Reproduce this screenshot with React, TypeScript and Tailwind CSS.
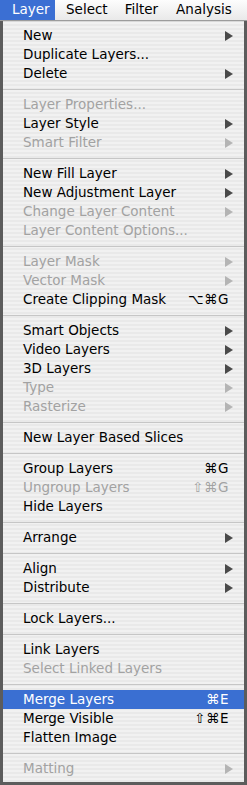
import React from 'react'
import clsx from 'clsx'

type Item =
  | { sep: true }
  | { label: string; disabled?: boolean; sub?: boolean; keys?: string; active?: boolean }

const ITEMS: Item[] = [
  { label: 'New', sub: true },
  { label: 'Duplicate Layers...' },
  { label: 'Delete', sub: true },
  { sep: true },
  { label: 'Layer Properties...', disabled: true },
  { label: 'Layer Style', sub: true },
  { label: 'Smart Filter', sub: true, disabled: true },
  { sep: true },
  { label: 'New Fill Layer', sub: true },
  { label: 'New Adjustment Layer', sub: true },
  { label: 'Change Layer Content', sub: true, disabled: true },
  { label: 'Layer Content Options...', disabled: true },
  { sep: true },
  { label: 'Layer Mask', sub: true, disabled: true },
  { label: 'Vector Mask', sub: true, disabled: true },
  { label: 'Create Clipping Mask', keys: '⌥⌘G' },
  { sep: true },
  { label: 'Smart Objects', sub: true },
  { label: 'Video Layers', sub: true },
  { label: '3D Layers', sub: true },
  { label: 'Type', sub: true, disabled: true },
  { label: 'Rasterize', sub: true, disabled: true },
  { sep: true },
  { label: 'New Layer Based Slices' },
  { sep: true },
  { label: 'Group Layers', keys: '⌘G' },
  { label: 'Ungroup Layers', keys: '⇧⌘G', disabled: true },
  { label: 'Hide Layers' },
  { sep: true },
  { label: 'Arrange', sub: true },
  { sep: true },
  { label: 'Align', sub: true },
  { label: 'Distribute', sub: true },
  { sep: true },
  { label: 'Lock Layers...' },
  { sep: true },
  { label: 'Link Layers' },
  { label: 'Select Linked Layers', disabled: true },
  { sep: true },
  { label: 'Merge Layers', keys: '⌘E', active: true },
  { label: 'Merge Visible', keys: '⇧⌘E' },
  { label: 'Flatten Image' },
  { sep: true },
  { label: 'Matting', sub: true, disabled: true },
]

function Arrow({ disabled }: { disabled?: boolean }) {
  return (
    <svg width="8" height="10" viewBox="0 0 8 10" className="ml-auto">
      <path d="M0 0 L8 5 L0 10 Z" fill={disabled ? '#b4b4b4' : '#4a4a4a'} />
    </svg>
  )
}

export default function App() {
  return (
    <div
      className="w-[247px] h-[785px] overflow-hidden bg-[#5c5c5c] text-[13.5px] leading-none"
      style={{ fontFamily: '"DejaVu Sans", Verdana, sans-serif' }}
    >
      {/* Menu bar */}
      <div className="flex h-[21px] items-center whitespace-nowrap bg-[linear-gradient(180deg,#fdfdfd,#e9e9e9)] border-b border-[#9c9c9c] text-black">
        <div className="flex h-full w-[55px] shrink-0 items-center bg-[#3b6fd3] pl-[12px] text-white">Layer</div>
        <div className="pl-[11px]">Select</div>
        <div className="pl-[17px]">Filter</div>
        <div className="pl-[18px]">Analysis</div>
      </div>

      {/* Drop-down */}
      <div className="ml-[3px] w-[241px] h-[761px] pt-[4px] bg-[repeating-linear-gradient(180deg,#f1f1f1_0px,#f1f1f1_2px,#e9e9e9_2px,#e9e9e9_4px)] border-t border-[#d8d8d8]">
        {ITEMS.map((it, i) =>
          'sep' in it ? (
            <div key={i} className="flex h-[12px] items-center">
              <div className="h-px w-full bg-[#c6c6c6]" />
            </div>
          ) : (
            <div
              key={i}
              className={clsx(
                'flex h-[19px] items-center pl-[20px] pr-[11px]',
                it.active ? 'bg-[#3a6fd2] text-white' : it.disabled ? 'text-[#a2a2a2]' : 'text-black'
              )}
            >
              <span>{it.label}</span>
              {it.sub && <Arrow disabled={it.disabled} />}
              {it.keys && <span className="ml-auto pr-[4px] tracking-[0.5px]">{it.keys}</span>}
            </div>
          )
        )}
      </div>
    </div>
  )
}
